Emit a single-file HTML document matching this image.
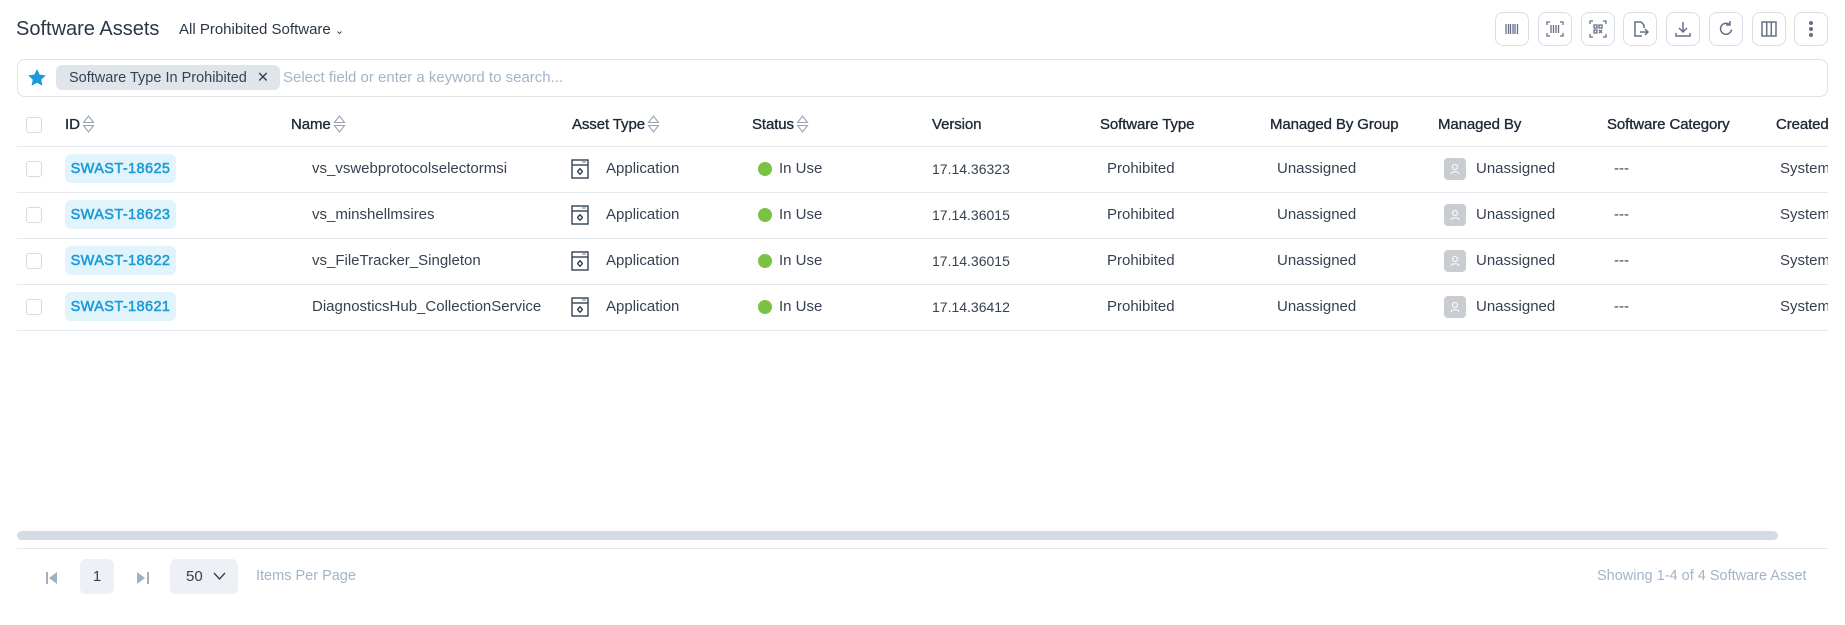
<!DOCTYPE html>
<html><head><meta charset="utf-8">
<style>
*{box-sizing:border-box;margin:0;padding:0}
body{width:1845px;height:625px;background:#fff;font-family:"Liberation Sans",sans-serif;color:#364152;position:relative;overflow:hidden}
.a{position:absolute;white-space:nowrap}
.ib{position:absolute;top:12px;width:34px;height:34px;border:1px solid #d8dfe8;border-radius:8px;display:flex;align-items:center;justify-content:center}
.hd{position:absolute;top:116px;font-size:15px;color:#1f2937;-webkit-text-stroke:0.35px #1f2937;letter-spacing:-0.1px}
.line{position:absolute;left:17px;width:1811px;height:1px;background:#e2e8f0}
.cb{position:absolute;left:26px;width:16px;height:16px;border:1px solid #d5dbe3;border-radius:3px;background:#fff}
.cell{position:absolute;font-size:15px;color:#364152}
.badge{position:absolute;left:65px;width:111px;height:29px;background:#e1f3fb;border-radius:6px;color:#1b9ad6;font-size:14.5px;-webkit-text-stroke:0.5px #1b9ad6;display:flex;align-items:center;justify-content:center;letter-spacing:0.4px}
.sort{display:inline-block;vertical-align:middle;margin-left:2px;margin-top:-3px}
</style></head><body>
<div class="a" style="left:16px;top:18px;font-size:20px;color:#2b3748">Software Assets</div>
<div class="a" style="left:179px;top:21px;font-size:15px;color:#2b3748">All Prohibited Software <span style="font-size:11px">&#8964;</span></div>

<div class="ib" style="left:1495px"><svg width="16" height="14"><g stroke="#667085" stroke-width="1.3"><path d="M2 2v10M4.5 2v10M6.5 2v10M9 2v10M11 2v10M13.5 2v10"/></g></svg></div>
<div class="ib" style="left:1538px"><svg width="18" height="16" fill="none" stroke="#667085" stroke-width="1.3"><path d="M1 4V1h3M14 1h3v3M1 12v3h3M17 12v3h-3M5 4v8M7.5 4v8M10 4v8M12.5 4v8"/></svg></div>
<div class="ib" style="left:1581px"><svg width="18" height="18" fill="none" stroke="#667085" stroke-width="1.3"><path d="M1 4V1h3M14 1h3v3M1 14v3h3M17 14v3h-3"/><rect x="5" y="5" width="3" height="3"/><rect x="10" y="5" width="3" height="3"/><rect x="5" y="10" width="3" height="3"/><path d="M10 10l3 3M13 10l-3 3"/></svg></div>
<div class="ib" style="left:1623px"><svg width="18" height="18" fill="none" stroke="#667085" stroke-width="1.5"><path d="M11 16H4V2h6l3 3v3M9 12h8M14 9l3 3-3 3"/></svg></div>
<div class="ib" style="left:1666px"><svg width="18" height="18" fill="none" stroke="#667085" stroke-width="1.5"><path d="M9 2v10M5 8l4 4 4-4M2 13v3h14v-3"/></svg></div>
<div class="ib" style="left:1709px"><svg width="18" height="18" fill="none" stroke="#667085" stroke-width="1.5"><path d="M14.5 9.5a5.5 5.5 0 1 1-2-5M13 1v4h-4"/></svg></div>
<div class="ib" style="left:1752px"><svg width="18" height="18" fill="none" stroke="#667085" stroke-width="1.5"><rect x="2" y="2" width="14" height="14"/><path d="M6.7 2v14M11.3 2v14"/></svg></div>
<div class="ib" style="left:1794px"><svg width="6" height="18" fill="#667085"><circle cx="3" cy="3" r="2"/><circle cx="3" cy="9" r="2"/><circle cx="3" cy="15" r="2"/></svg></div>

<div class="a" style="left:17px;top:59px;width:1811px;height:38px;border:1px solid #dbe2ea;border-radius:8px"></div>
<svg class="a" style="left:27px;top:68px" width="20" height="19"><path d="M10 1l2.7 5.6 6.1.8-4.5 4.2 1.1 6.1L10 14.8l-5.4 2.9 1.1-6.1L1.2 7.4l6.1-.8z" fill="#1b9ad6"/></svg>
<div class="a" style="left:56px;top:65px;width:224px;height:25px;background:#e0e5ec;border-radius:6px;font-size:14.5px;color:#364152;padding:5px 0 0 13px">Software Type In Prohibited <span style="margin-left:6px">✕</span></div>
<div class="a" style="left:283px;top:69px;font-size:15px;color:#a3b4c8">Select field or enter a keyword to search...</div>

<div class="cb" style="top:117px"></div>
<div class="hd" style="left:65px">ID<svg class="sort" width="13" height="20" fill="none" stroke="#98a2b3" stroke-width="1.1"><path d="M1.5 8.5L6.5 2l5 6.5zM1.5 11.5l5 6.5 5-6.5z"/></svg></div>
<div class="hd" style="left:291px">Name<svg class="sort" width="13" height="20" fill="none" stroke="#98a2b3" stroke-width="1.1"><path d="M1.5 8.5L6.5 2l5 6.5zM1.5 11.5l5 6.5 5-6.5z"/></svg></div>
<div class="hd" style="left:572px">Asset Type<svg class="sort" width="13" height="20" fill="none" stroke="#98a2b3" stroke-width="1.1"><path d="M1.5 8.5L6.5 2l5 6.5zM1.5 11.5l5 6.5 5-6.5z"/></svg></div>
<div class="hd" style="left:752px">Status<svg class="sort" width="13" height="20" fill="none" stroke="#98a2b3" stroke-width="1.1"><path d="M1.5 8.5L6.5 2l5 6.5zM1.5 11.5l5 6.5 5-6.5z"/></svg></div>
<div class="hd" style="left:932px">Version</div>
<div class="hd" style="left:1100px">Software Type</div>
<div class="hd" style="left:1270px">Managed By Group</div>
<div class="hd" style="left:1438px">Managed By</div>
<div class="hd" style="left:1607px">Software Category</div>
<div class="hd" style="left:1776px;width:52px;overflow:hidden">Created</div>

<div class="line" style="top:146px"></div>
<div class="line" style="top:192px"></div>
<div class="line" style="top:238px"></div>
<div class="line" style="top:284px"></div>
<div class="line" style="top:330px"></div>

<div id="rows"></div>
<script>
var d=[["SWAST-18625","vs_vswebprotocolselectormsi","17.14.36323"],["SWAST-18623","vs_minshellmsires","17.14.36015"],["SWAST-18622","vs_FileTracker_Singleton","17.14.36015"],["SWAST-18621","DiagnosticsHub_CollectionService","17.14.36412"]];
var h="";
d.forEach(function(r,i){var t=146+i*46;var c=t+14;
h+='<div class="cb" style="top:'+(t+15)+'px"></div>';
h+='<div class="badge" style="top:'+(t+8)+'px">'+r[0]+'</div>';
h+='<div class="cell a" style="left:312px;top:'+c+'px">'+r[1]+'</div>';
h+='<svg class="a" style="left:571px;top:'+(t+13)+'px" width="18" height="20" fill="none" stroke="#364152" stroke-width="1.4"><rect x="1" y="1" width="16" height="18"/><path d="M1 6h16"/><circle cx="9" cy="12.5" r="2"/><path d="M12 2.5v1M14 2.5v1M9 9v1M9 15v1M6 12.5h1M11 12.5h1"/></svg>';
h+='<div class="cell a" style="left:606px;top:'+c+'px">Application</div>';
h+='<div class="a" style="left:758px;top:'+(t+16)+'px;width:14px;height:14px;border-radius:50%;background:#7cc242"></div>';
h+='<div class="cell a" style="left:779px;top:'+c+'px">In Use</div>';
h+='<div class="cell a" style="left:932px;top:'+(c+1)+'px;font-size:14px">'+r[2]+'</div>';
h+='<div class="cell a" style="left:1107px;top:'+c+'px">Prohibited</div>';
h+='<div class="cell a" style="left:1277px;top:'+c+'px">Unassigned</div>';
h+='<div class="a" style="left:1444px;top:'+(t+12)+'px;width:22px;height:22px;border-radius:4px;background:#c9cdd2"><svg width="22" height="22" fill="none" stroke="#fff" stroke-width="1.1"><circle cx="11" cy="9" r="2.5"/><path d="M7 16c0-3 8-3 8 0"/></svg></div>';
h+='<div class="cell a" style="left:1476px;top:'+c+'px">Unassigned</div>';
h+='<div class="cell a" style="left:1614px;top:'+c+'px">---</div>';
h+='<div class="cell a" style="left:1780px;top:'+c+'px;width:48px;overflow:hidden">System</div>';
});
document.getElementById("rows").innerHTML=h;
</script>

<div class="a" style="left:17px;top:531px;width:1761px;height:9px;border-radius:5px;background:#d3dce5"></div>
<div class="line" style="top:548px"></div>

<svg class="a" style="left:46px;top:572px" width="12" height="12" fill="#9fb0c4"><rect x="0" y="0" width="2" height="12"/><path d="M11 0v12L3 6z"/></svg>
<div class="a" style="left:80px;top:559px;width:34px;height:35px;border-radius:6px;background:#edf0f5;font-size:15px;color:#364152;text-align:center;line-height:35px">1</div>
<svg class="a" style="left:137px;top:572px" width="12" height="12" fill="#9fb0c4"><path d="M0 0v12l8-6z"/><rect x="10" y="0" width="2" height="12"/></svg>
<div class="a" style="left:170px;top:559px;width:68px;height:35px;border-radius:6px;background:#edf0f5;font-size:15px;color:#364152;line-height:35px;padding-left:16px">50<svg style="position:absolute;left:43px;top:13px" width="13" height="9" fill="none" stroke="#364152" stroke-width="1.4"><path d="M1 1l5.5 6L12 1"/></svg></div>
<div class="a" style="left:256px;top:568px;font-size:14.5px;color:#a3b4c8">Items Per Page</div>
<div class="a" style="left:1597px;top:568px;font-size:14.5px;color:#a3b4c8">Showing 1-4 of 4 Software Asset</div>
</body></html>
